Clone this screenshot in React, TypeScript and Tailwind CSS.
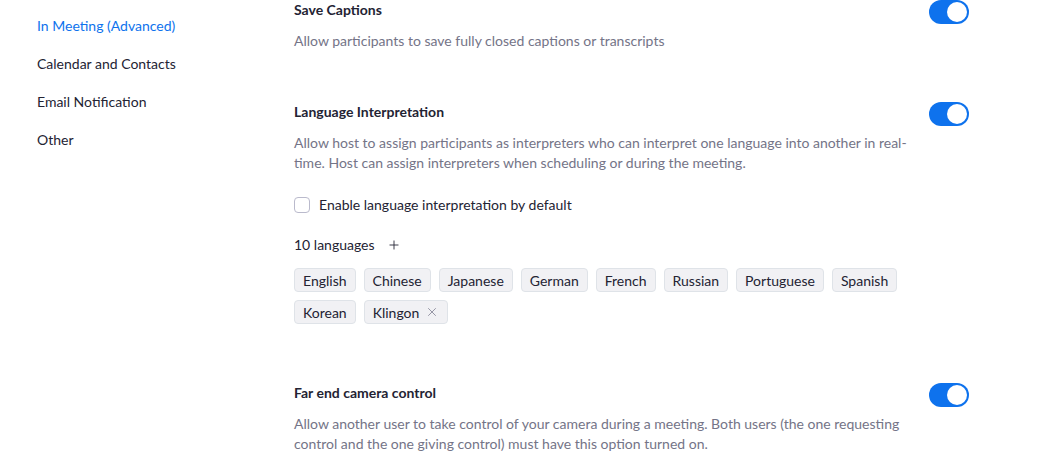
import { X, Plus } from 'lucide-react';

const navItems = ['In Meeting (Advanced)', 'Calendar and Contacts', 'Email Notification', 'Other'];

const languages = ['English', 'Chinese', 'Japanese', 'German', 'French', 'Russian', 'Portuguese', 'Spanish', 'Korean', 'Klingon'];

function Toggle() {
  return (
    <div className="flex h-[24px] w-[40px] shrink-0 items-center justify-end rounded-full bg-[#0e72ed] px-[2px]">
      <div className="h-[20px] w-[20px] rounded-full bg-white" />
    </div>
  );
}

function SettingRow({ title, children }: { title: string; children: React.ReactNode }) {
  return (
    <div className="flex items-start justify-between">
      <div className="w-[620px]">
        <h3 className="text-[14px] font-bold leading-[20px] text-[#232333]">{title}</h3>
        {children}
      </div>
      <div className="mr-[93px]">
        <Toggle />
      </div>
    </div>
  );
}

export default function App() {
  return (
    <main
      className="flex h-[471px] w-full overflow-hidden bg-white"
      style={{ fontFamily: 'Lato, "Noto Sans", sans-serif' }}
    >
      <nav className="w-[294px] shrink-0 pl-[37px] pt-[16px]">
        {navItems.map((item, i) => (
          <div
            key={item}
            className={`h-[38px] text-[14px] leading-[20px] ${i === 0 ? 'text-[#0e72ed]' : 'text-[#232333]'}`}
          >
            {item}
          </div>
        ))}
      </nav>

      <div className="flex-1">
        <SettingRow title="Save Captions">
          <p className="mt-[11px] text-[14px] leading-[20px] text-[#747487]">
            Allow participants to save fully closed captions or transcripts
          </p>
        </SettingRow>

        <div className="mt-[51px]">
          <SettingRow title="Language Interpretation">
            <p className="mt-[11px] text-[14px] leading-[20px] text-[#747487]">
              Allow host to assign participants as interpreters who can interpret one language into another in real-time. Host can assign interpreters when scheduling or during the meeting.
            </p>

            <label className="mt-[22px] flex items-center gap-[9px] text-[14px] leading-[20px] text-[#232333]">
              <span className="h-[16px] w-[16px] rounded-[4px] border border-[#babacc] bg-white" />
              Enable language interpretation by default
            </label>

            <div className="mt-[20px] flex items-center gap-[12px] text-[14px] leading-[20px] text-[#232333]">
              10 languages
              <Plus size={14} strokeWidth={1.5} />
            </div>

            <div className="mt-[13px] flex w-[620px] flex-wrap gap-x-[8px] gap-y-[8px]">
              {languages.map((lang) => (
                <span
                  key={lang}
                  className="flex h-[24px] items-center gap-[6px] rounded-[4px] border border-[#dfe3e8] bg-[#f1f1f4] px-[8px] text-[14px] text-[#232333]"
                >
                  {lang}
                  {lang === 'Klingon' ? <X size={14} strokeWidth={1.25} className="text-[#747487]" /> : null}
                </span>
              ))}
            </div>
          </SettingRow>
        </div>

        <div className="mt-[59px]">
          <SettingRow title="Far end camera control">
            <p className="mt-[11px] text-[14px] leading-[20px] text-[#747487]">
              Allow another user to take control of your camera during a meeting. Both users (the one requesting control and the one giving control) must have this option turned on.
            </p>
          </SettingRow>
        </div>
      </div>
    </main>
  );
}
